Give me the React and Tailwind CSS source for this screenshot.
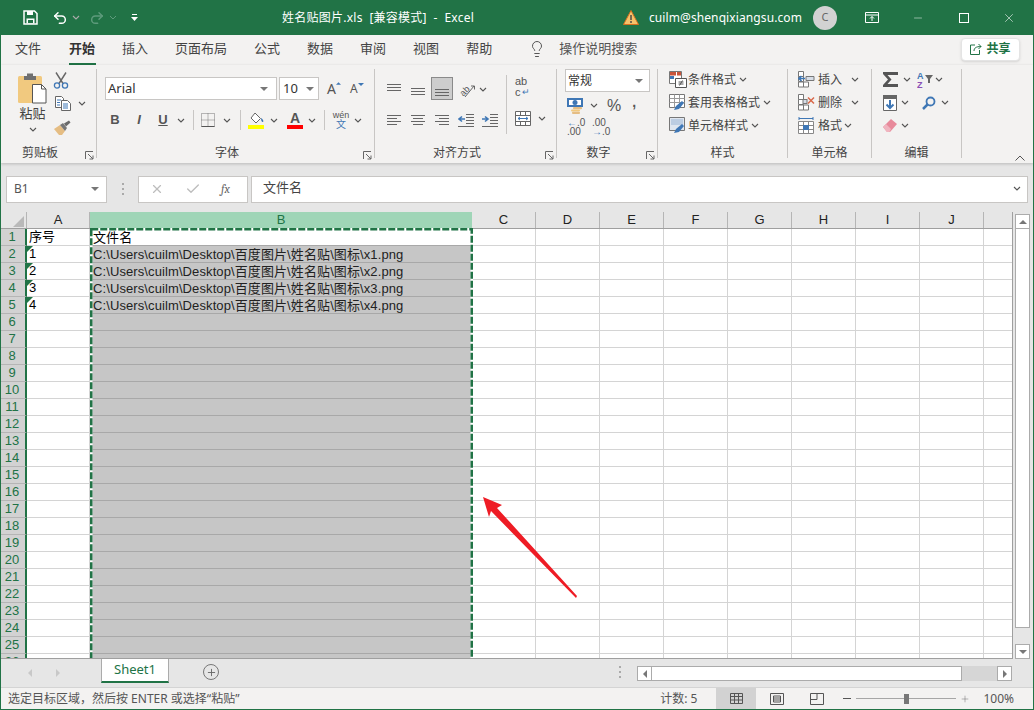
import { Undo2, Redo2, Lightbulb, X, Check, Minus, Plus } from "lucide-react"

const Chev = ({ className = "" }) => (
  <svg width="8" height="5" viewBox="0 0 8 5" className={`shrink-0 ${className}`}>
    <path d="M1 1l3 3 3-3" fill="none" stroke="#555" strokeWidth="1.1" />
  </svg>
)

const Tri = ({ dir = "down", color = "#777", size = 4 }) => {
  const pts = {
    down: "0,0 8,0 4,4",
    up: "0,4 8,4 4,0",
    left: "4,0 4,8 0,4",
    right: "0,0 0,8 4,4",
  }
  const vertical = dir === "down" || dir === "up"
  return (
    <svg width={vertical ? size * 2 : size} height={vertical ? size : size * 2} viewBox={vertical ? "0 0 8 4" : "0 0 4 8"}>
      <polygon points={pts[dir]} fill={color} />
    </svg>
  )
}

const Launcher = () => (
  <svg width="9" height="9" viewBox="0 0 9 9" className="shrink-0">
    <path d="M0.5 8V0.5H8M3 3l5 5M8 4.5V8H4.5" fill="none" stroke="#666" strokeWidth="1" />
  </svg>
)

const Lines = ({ rows }) => (
  <svg width="16" height="16" viewBox="0 0 16 16">
    {rows.map(([y, x1, x2], i) => (
      <line key={i} x1={x1} x2={x2} y1={y + 0.5} y2={y + 0.5} stroke="#666" />
    ))}
  </svg>
)

const Indent = ({ flip }) => (
  <svg width="16" height="14" viewBox="0 0 16 14">
    <path d="M8 1.5h8M8 4.5h8M8 7.5h8M8 10.5h8M0 13.5h16" stroke="#666" fill="none" />
    <path
      d={flip ? "M0 6h5M3 3.5L6 6 3 8.5" : "M1 6h6M4 3.5L1 6l3 2.5"}
      stroke="#3f77b5"
      strokeWidth="1.6"
      fill="none"
    />
  </svg>
)

const PasteIcon = () => (
  <svg width="29" height="32" viewBox="0 0 29 32">
    <rect x="0" y="4" width="24" height="27" rx="1.5" fill="#f1c97f" />
    <path d="M6 4h3V1.5h6V4h3v4H6z" fill="#6f6f6f" />
    <path d="M14.5 12.5h9l4.5 4.5v14H14.5z" fill="#fff" stroke="#555" />
    <path d="M23.5 12.5v4.5H28" fill="none" stroke="#555" />
  </svg>
)

const CutIcon = () => (
  <svg width="16" height="17" viewBox="0 0 16 17">
    <path d="M3 0.5l7 11M13 0.5l-7 11" stroke="#666" strokeWidth="1.4" />
    <circle cx="4" cy="13.5" r="2.6" fill="none" stroke="#3f77b5" strokeWidth="1.3" />
    <circle cx="12" cy="13.5" r="2.6" fill="none" stroke="#3f77b5" strokeWidth="1.3" />
  </svg>
)

const CopyIcon = () => (
  <svg width="16" height="15" viewBox="0 0 16 15">
    <path d="M.5.5h6l2 2v9h-8z" fill="#fff" stroke="#666" />
    <path d="M6.5 4.5h6l3 3v7h-9z" fill="#fff" stroke="#666" />
    <path d="M2 4h4M2 6.5h3M2 9h3M8 8h5M8 10h5M8 12h5" stroke="#3f77b5" />
  </svg>
)

const BrushIcon = () => (
  <svg width="17" height="15" viewBox="0 0 17 15">
    <path d="M0 9l6-4 5 6-3 4H5z" fill="#e5bd83" />
    <path d="M6 5l3-2 4 5-2 3z" fill="#777" />
    <path d="M10 3.5L15 .5l1.5 2-4.5 4z" fill="#6a6a6a" />
  </svg>
)

const BorderIcon = () => (
  <svg width="14" height="14" viewBox="0 0 14 14">
    <path d="M.5.5h13v13H.5zM7 .5v13M.5 7h13" fill="none" stroke="#777" strokeDasharray="1 1" />
    <path d="M.5 13.5h13" stroke="#555" />
  </svg>
)

const FillIcon = () => (
  <svg width="17" height="17" viewBox="0 0 17 17">
    <path d="M7 1l5.5 5.5L8 11 3 6z" fill="#fff" stroke="#666" />
    <path d="M13 6c2 1.5 3 3 2 4-1 .5-2-1-2-4z" fill="#3f77b5" />
    <rect x="0" y="13" width="16" height="4" fill="#ffff00" />
  </svg>
)

const OrientIcon = () => (
  <svg width="18" height="16" viewBox="0 0 18 16">
    <g transform="rotate(-45 7 9)">
      <text x="1" y="11" fontSize="9" fill="#555" fontFamily="Liberation Sans">ab</text>
    </g>
    <path d="M6 15L15 4M12 4h3.5v3.5" fill="none" stroke="#666" />
  </svg>
)

const MergeIcon = () => (
  <svg width="16" height="15" viewBox="0 0 16 15">
    <path d="M.5.5h15v14H.5zM.5 4.5h15M.5 10.5h15M5.5.5v4M10.5.5v4M5.5 10.5v4M10.5 10.5v4" fill="#fff" stroke="#666" />
    <path d="M3 7.5h10M5 6l-2 1.5L5 9M11 6l2 1.5L11 9" fill="none" stroke="#3f77b5" />
  </svg>
)

const MoneyIcon = () => (
  <svg width="17" height="16" viewBox="0 0 17 16">
    <path d="M1 1h14v7H1z" fill="#fff" stroke="#3f77b5" strokeWidth="2" />
    <ellipse cx="8" cy="4.5" rx="2.5" ry="2.5" fill="#3f77b5" />
    <rect x="6" y="9" width="9" height="2.2" rx="1" fill="#e5bd83" />
    <rect x="4" y="11.4" width="9" height="2.2" rx="1" fill="#f1c97f" />
    <rect x="5" y="13.8" width="8" height="2.2" rx="1" fill="#e5bd83" />
  </svg>
)

const CondIcon = () => (
  <svg width="18" height="17" viewBox="0 0 18 17">
    <path d="M.5.5h12v12H.5z" fill="#fff" stroke="#777" />
    <rect x="1" y="1" width="6" height="3.5" fill="#c9553b" />
    <rect x="1" y="5" width="4" height="3" fill="#3f77b5" />
    <rect x="8" y="1" width="4" height="3.5" fill="#c9553b" />
    <path d="M6.5 7.5h11v9h-11z" fill="#fff" stroke="#555" />
    <path d="M9.5 11h5M9.5 13h5M13.5 9.5l-3 5" stroke="#555" fill="none" />
  </svg>
)

const TableIcon = ({ fillHead }) => (
  <svg width="18" height="17" viewBox="0 0 18 17">
    <path d="M.5.5h15v13H.5z" fill={fillHead ? "#dfe6ef" : "#fff"} stroke="#777" />
    {fillHead ? (
      <path d="M2 2h12v6H2z" fill="#bccde2" />
    ) : (
      <path d="M5.5.5v13M10.5.5v13M.5 4.5h15M.5 8.5h15" stroke="#999" />
    )}
    <path d="M5 16l2-4 6-5 2 2-5 6z" fill="#3f77b5" />
  </svg>
)

const CellsIcon = ({ mode }) => (
  <svg width="17" height="17" viewBox="0 0 17 17">
    <path d="M.5.5h5v5h-5zM.5 5.5h5v5h-5zM.5 11h5v5h-5zM5.5 11h5v5h-5z" fill="#fff" stroke="#777" />
    {mode === "insert" ? (
      <>
        <path d="M8 5.5h8v4H8z" fill="#d6dde7" stroke="#777" />
        <path d="M1 7.5h6M3.5 5l-2.5 2.500 2.500 2.500" stroke="#3f77b5" strokeWidth="1.6" fill="none" />
      </>
    ) : (
      <>
        <rect x="5" y="5.5" width="4" height="4" fill="#d6dde7" stroke="#777" />
        <path d="M10 3.500l6 6M16 3.500l-6 6" stroke="#d9694a" strokeWidth="1.5" />
      </>
    )}
  </svg>
)

const FormatIcon = () => (
  <svg width="16" height="17" viewBox="0 0 16 17">
    <path d="M.5 4.500h15v12H.5zM5.500 4.500v12M10.500 4.500v12M.5 8.500h15M.5 12.500h15" fill="#fff" stroke="#888" />
    <rect x="5" y="8" width="6" height="5" fill="#3f77b5" />
    <path d="M1 1.500h14M1 0v3M15 0v3" stroke="#3f77b5" />
  </svg>
)

const SumIcon = () => (
  <svg width="15" height="15" viewBox="0 0 15 15">
    <path d="M0 0h15v3H4.500l4 4.500-4 4.500H15v3H0v-2l5-5.500L0 2z" fill="#555" />
  </svg>
)

const SortIcon = () => (
  <svg width="16" height="18" viewBox="0 0 16 18">
    <text x="0" y="8" fontSize="9" fontWeight="700" fill="#3f77b5" fontFamily="Liberation Sans">A</text>
    <text x="0" y="17" fontSize="9" fontWeight="700" fill="#8a4fb5" fontFamily="Liberation Sans">Z</text>
    <path d="M8 4h8l-3 4v4h-2V8z" fill="#666" />
  </svg>
)

const FillDownIcon = () => (
  <svg width="14" height="16" viewBox="0 0 14 16">
    <path d="M.5.5h13v15H.5z" fill="#fff" stroke="#666" />
    <rect x="0" y="0" width="14" height="4" fill="#666" />
    <path d="M7 5v8M3.500 9.500L7 13l3.500-3.500" stroke="#3f77b5" strokeWidth="2" fill="none" />
  </svg>
)

const FindIcon = () => (
  <svg width="14" height="14" viewBox="0 0 14 14">
    <circle cx="8.500" cy="5.500" r="4" fill="none" stroke="#3f77b5" strokeWidth="1.800" />
    <path d="M5.500 8.500L1 13" stroke="#3f77b5" strokeWidth="2.500" />
  </svg>
)

const EraserIcon = () => (
  <svg width="14" height="13" viewBox="0 0 14 13">
    <path d="M0 8l8-8 6 5-7 8H4z" fill="#e88a9b" />
    <path d="M0 8l3-3 5 5-1.500 3H4z" fill="#f0b4bf" />
  </svg>
)

const Group = ({ w, label, launcher, children }) => (
  <>
    <div className="flex h-full flex-col" style={{ width: w }}>
      <div className="h-[80px]">{children}</div>
      <div className="flex h-[16px] items-center">
        <div className={`flex-1 text-center text-[12px] leading-none text-[#444] ${launcher ? "pr-[6px]" : ""}`}>{label}</div>
        {launcher && (
          <div className="mt-[4px] w-[11px]">
            <Launcher />
          </div>
        )}
      </div>
    </div>
    <div className="mt-[4px] h-[89px] w-px bg-[#c8c6c4]" />
  </>
)

const StyleRow = ({ icon, label, top }) => (
  <div className={`flex h-[23px] items-center ${top}`}>
    <div className="w-[18px]">{icon}</div>
    <span className="ml-px text-[12px] text-[#444]">{label}</span>
    <Chev className="ml-[3px]" />
  </div>
)

const columns = [
  { name: "C", w: "w-[64px]" },
  { name: "D", w: "w-[64px]" },
  { name: "E", w: "w-[64px]" },
  { name: "F", w: "w-[64px]" },
  { name: "G", w: "w-[64px]" },
  { name: "H", w: "w-[64px]" },
  { name: "I", w: "w-[64px]" },
  { name: "J", w: "w-[64px]" },
  { name: "", w: "w-[28px]" },
]

const tabs = ["公式", "数据", "审阅", "视图", "帮助"]
const rows = Array.from({ length: 26 }, (_, i) => i + 1)

const cellFont = "font-['Liberation_Sans','Noto_Sans_CJK_SC',sans-serif]"

const App = () => {
  return (
    <div className="box-border flex h-[710px] w-[1034px] flex-col overflow-hidden border-x border-b border-[#217346] bg-[#e6e6e6] font-['Noto_Sans','Noto_Sans_CJK_SC',sans-serif] text-[#444]">
      {/* Title bar */}
      <div className="flex h-[35px] shrink-0 items-center bg-[#217346] text-white">
        <svg width="15" height="15" viewBox="0 0 15 15" className="ml-[22px]">
          <path d="M1 1h10.500L14 3.500V14H1z" fill="none" stroke="#fff" strokeWidth="1.500" />
          <rect x="4" y="1" width="6" height="4" fill="#fff" />
          <rect x="3.500" y="8.500" width="8" height="5" fill="#fff" />
          <rect x="5" y="10" width="5" height="3" fill="#217346" />
        </svg>
        <Undo2 size={16} strokeWidth={2.200} className="ml-[14px]" />
        <Chev className="ml-[4px] invert" />
        <Redo2 size={16} strokeWidth={2.200} className="ml-[9px] text-[#5e9b7c]" />
        <svg width="8" height="5" viewBox="0 0 8 5" className="ml-[4px]">
          <path d="M1 1l3 3 3-3" fill="none" stroke="#5e9b7c" />
        </svg>
        <svg width="7" height="8" viewBox="0 0 7 8" className="ml-[14px]">
          <path d="M1 .5h5" stroke="#fff" />
          <polygon points="0,3 7,3 3.500,7" fill="#fff" />
        </svg>
        <div className="ml-[144px] whitespace-pre text-[12px] tracking-[0.25px]">姓名贴图片.xls  [兼容模式]  -  Excel</div>
        <div className="ml-auto flex items-center">
          <svg width="16" height="15" viewBox="0 0 16 15">
            <polygon points="8,.5 15.500,14.500 .5,14.500" fill="#f6c26b" stroke="#d9701f" />
            <path d="M8 5v5M8 11v2" stroke="#444" strokeWidth="1.400" />
          </svg>
          <span className="ml-[10px] text-[12px] tracking-[0.1px]">cuilm@shenqixiangsu.com</span>
          <div className="ml-[11px] flex h-[24px] w-[24px] items-center justify-center rounded-full bg-[#d2d2d2] text-[11px] text-[#666]">
            C
          </div>
          <svg width="14" height="11" viewBox="0 0 14 11" className="ml-[28px]">
            <path d="M.5.5h13v10H.5zM.5 3h13M7 9V4.500M5 6.500l2-2 2 2" fill="none" stroke="#fff" />
          </svg>
          <Minus size={12} strokeWidth={1} className="ml-[33px]" />
          <svg width="10" height="10" viewBox="0 0 10 10" className="ml-[35px]">
            <rect x=".5" y=".5" width="9" height="9" fill="none" stroke="#fff" />
          </svg>
          <X size={14} strokeWidth={1} className="ml-[33px] mr-[17px]" />
        </div>
      </div>

      {/* Tabs */}
      <div className="flex h-[30px] shrink-0 items-center bg-[#f3f2f1] pb-[2px] text-[13px]">
        <span className="ml-[14px]">文件</span>
        <div className="relative ml-[28px]">
          <span className="font-bold text-[#333]">开始</span>
          <div className="absolute -bottom-[6px] left-0 h-[2px] w-[27px] bg-[#217346]" />
        </div>
        <span className="ml-[27px]">插入</span>
        <span className="ml-[27px]">页面布局</span>
        {tabs.map((t) => (
          <span key={t} className="ml-[27px]">
            {t}
          </span>
        ))}
        <Lightbulb size={18} strokeWidth={1.200} className="ml-[36px]" />
        <span className="ml-[13px] text-[#555]">操作说明搜索</span>
        <div className="ml-auto mr-[13px] flex h-[23px] w-[59px] items-center justify-center gap-[4px] rounded-sm border border-[#e4e4e4] bg-white text-[#217346] shadow-sm">
          <svg width="12" height="12" viewBox="0 0 12 12">
            <path d="M5 2H.5v9.500h9V7M4 8c0-3 2-4.500 7-4.500M8.500 1l2.500 2.500L8.500 6" fill="none" stroke="#217346" />
          </svg>
          <span className="text-[12px] font-bold">共享</span>
        </div>
      </div>

      {/* Ribbon */}
      <div className="relative z-10 flex h-[98px] shrink-0 bg-[#f3f2f1] shadow-[0_1px_3px_rgba(0,0,0,0.2)]">
        <Group w={95} label="剪贴板" launcher>
          <div className="flex pt-[7px]">
            <div className="ml-[17px] flex w-[29px] flex-col items-center">
              <PasteIcon />
              <span className="text-[13px] leading-[18px]">粘贴</span>
              <Chev className="mt-[5px]" />
            </div>
            <div className="ml-[8px] flex flex-col items-start">
              <div className="ml-[-2px]">
                <CutIcon />
              </div>
              <div className="mt-[7px] flex items-center">
                <CopyIcon />
                <Chev className="ml-[7px]" />
              </div>
              <div className="mt-[9px] ml-[-1px]">
                <BrushIcon />
              </div>
            </div>
          </div>
        </Group>

        <Group w={277} label="字体" launcher>
          <div className="mt-[12px] flex h-[23px] items-center pl-[8px]">
            <div className="flex h-[23px] w-[172px] items-center justify-between border border-[#c8c6c4] bg-white pl-[2px] pr-[8px] text-[13px] text-[#333]">
              Arial
              <Tri />
            </div>
            <div className="ml-[2px] flex h-[23px] w-[40px] items-center justify-between border border-[#c8c6c4] bg-white pl-[3px] pr-[4px] text-[13px] text-[#333]">
              10
              <Tri />
            </div>
            <div className="ml-[8px] flex w-[14px] items-start text-[14px] leading-none text-[#555]">
              A
              <Tri dir="up" color="#3f77b5" size={3} />
            </div>
            <div className="ml-[9px] flex w-[14px] items-start text-[12px] leading-none text-[#555]">
              A
              <Tri color="#3f77b5" size={3} />
            </div>
          </div>
          <div className={`mt-[9px] flex h-[22px] items-center pl-[13px] text-[13px] text-[#555] ${cellFont}`}>
            <span className="w-[10px] text-center font-bold">B</span>
            <span className="ml-[14px] w-[10px] text-center font-bold italic">I</span>
            <span className="ml-[14px] w-[10px] text-center font-bold underline">U</span>
            <Chev className="ml-[9px]" />
            <div className="ml-[8px] h-[20px] w-px bg-[#c8c6c4]" />
            <div className="ml-[7px]">
              <BorderIcon />
            </div>
            <Chev className="ml-[8px]" />
            <div className="ml-[9px] h-[20px] w-px bg-[#c8c6c4]" />
            <div className="ml-[7px]">
              <FillIcon />
            </div>
            <Chev className="ml-[5px]" />
            <div className="ml-[9px] flex w-[16px] flex-col items-center">
              <span className="text-[14px] font-bold leading-[13px]">A</span>
              <div className="h-[4px] w-[16px] bg-[#ff0000]" />
            </div>
            <Chev className="ml-[5px]" />
            <div className="ml-[8px] h-[20px] w-px bg-[#c8c6c4]" />
            <div className="ml-[8px] flex w-[16px] flex-col items-center leading-none">
              <span className="text-[9px]">wén</span>
              <span className="text-[10px] text-[#3f77b5]">文</span>
            </div>
            <Chev className="ml-[5px]" />
          </div>
        </Group>

        <Group w={181} label="对齐方式" launcher>
          <div className="flex pl-[11px]">
            <div className="flex w-[120px] flex-col">
              <div className="flex h-[35px] items-end">
                <div className="mb-[2px] w-[16px]">
                  <Lines rows={[[2, 1, 15], [5, 1, 15], [8, 1, 15]]} />
                </div>
                <div className="mb-[2px] ml-[8px] w-[16px]">
                  <Lines rows={[[6, 1, 15], [9, 1, 15], [12, 1, 15]]} />
                </div>
                <div className="ml-[5px] flex h-[23px] w-[22px] items-center justify-center border border-[#8a8a8a] bg-[#cdcdcd]">
                  <Lines rows={[[8, 1, 15], [11, 1, 15], [14, 1, 15]]} />
                </div>
                <div className="mb-[2px] ml-[6px]">
                  <OrientIcon />
                </div>
                <Chev className="mb-[8px] ml-[2px]" />
              </div>
              <div className="mt-[12px] flex h-[16px] items-center gap-[8px]">
                <Lines rows={[[3, 1, 15], [6, 1, 11], [9, 1, 15], [12, 1, 11]]} />
                <Lines rows={[[3, 1, 15], [6, 3, 13], [9, 1, 15], [12, 3, 13]]} />
                <Lines rows={[[3, 1, 15], [6, 5, 15], [9, 1, 15], [12, 5, 15]]} />
                <Indent />
                <Indent flip />
              </div>
            </div>
            <div className="mt-[10px] ml-0 h-[59px] w-px bg-[#c8c6c4]" />
            <div className="ml-[8px] flex flex-col">
              <div className={`mt-[11px] h-[22px] text-[11px] leading-[11px] text-[#555] ${cellFont}`}>
                <div>ab</div>
                <div className="flex items-center">
                  c<span className="ml-px text-[9px] text-[#3f77b5]">↵</span>
                </div>
              </div>
              <div className="mt-[13px] flex items-center">
                <MergeIcon />
                <Chev className="ml-[7px]" />
              </div>
            </div>
          </div>
        </Group>

        <Group w={100} label="数字" launcher>
          <div className="ml-[8px] mt-[4px] flex h-[23px] w-[85px] items-center justify-between border border-[#c8c6c4] bg-white pl-[2px] pr-[6px] text-[12px] text-[#333]">
            常规
            <Tri />
          </div>
          <div className="ml-[10px] mt-[4px] flex h-[19px] items-center">
            <MoneyIcon />
            <Chev className="ml-[6px]" />
            <span className={`ml-[9px] text-[16px] text-[#555] ${cellFont}`}>%</span>
            <span className={`ml-[11px] mb-[6px] text-[14px] font-bold text-[#555] ${cellFont}`}>,</span>
          </div>
          <div className={`ml-[10px] mt-[3px] flex text-[10px] leading-[9px] text-[#555] ${cellFont}`}>
            <div className="w-[25px]">
              <div className="flex items-center">
                <span className="text-[#3f77b5]">←</span>.0
              </div>
              <div>.00</div>
            </div>
            <div>
              <div>.00</div>
              <div className="flex items-center">
                <span className="text-[#3f77b5]">→</span>.0
              </div>
            </div>
          </div>
        </Group>

        <Group w={129} label="样式">
          <div className="flex flex-col pl-[11px] pt-[3px]">
            <StyleRow icon={<CondIcon />} label="条件格式" />
            <StyleRow icon={<TableIcon />} label="套用表格格式" />
            <StyleRow icon={<TableIcon fillHead />} label="单元格样式" />
          </div>
        </Group>

        <Group w={83} label="单元格">
          <div className="flex flex-col pl-[10px] pt-[3px]">
            <div className="flex h-[23px] items-center">
              <CellsIcon mode="insert" />
              <span className="ml-[3px] text-[12px]">插入</span>
              <Chev className="ml-[9px]" />
            </div>
            <div className="flex h-[23px] items-center">
              <CellsIcon mode="delete" />
              <span className="ml-[3px] text-[12px]">删除</span>
              <Chev className="ml-[9px]" />
            </div>
            <div className="flex h-[23px] items-center">
              <FormatIcon />
              <span className="ml-[4px] text-[12px]">格式</span>
              <Chev className="ml-[2px]" />
            </div>
          </div>
        </Group>

        <Group w={89} label="编辑">
          <div className="flex flex-col pl-[11px] pt-[6px]">
            <div className="flex h-[17px] items-center">
              <SumIcon />
              <Chev className="ml-[5px]" />
              <div className="ml-[6px]">
                <SortIcon />
              </div>
              <Chev className="ml-[2px]" />
            </div>
            <div className="mt-[6px] flex h-[17px] items-center">
              <FillDownIcon />
              <Chev className="ml-[4px]" />
              <div className="ml-[13px]">
                <FindIcon />
              </div>
              <Chev className="ml-[5px]" />
            </div>
            <div className="mt-[6px] flex h-[17px] items-center">
              <EraserIcon />
              <Chev className="ml-[4px]" />
            </div>
          </div>
        </Group>

        <svg width="10" height="6" viewBox="0 0 10 6" className="ml-[53px] mt-[90px]">
          <path d="M.5 5.500L5 1l4.500 4.500" fill="none" stroke="#555" />
        </svg>
      </div>

      {/* Formula bar */}
      <div className="flex h-[49px] shrink-0 items-center bg-[#e6e6e6] pt-[3px]">
        <div className="ml-[5px] flex h-[27px] w-[101px] items-center justify-between border border-[#c8c6c4] bg-white pl-[7px] pr-[7px] text-[12px] text-[#555]">
          B1
          <Tri color="#777" />
        </div>
        <div className="ml-[15px] flex h-[12px] w-[3px] flex-col justify-between">
          <div className="h-[2px] w-[2px] bg-[#aaa]" />
          <div className="h-[2px] w-[2px] bg-[#aaa]" />
          <div className="h-[2px] w-[2px] bg-[#aaa]" />
        </div>
        <div className="ml-[13px] flex h-[27px] w-[110px] items-center border border-[#c8c6c4] bg-white">
          <X size={14} className="ml-[11px] text-[#bdbdbd]" />
          <Check size={16} className="ml-[21px] text-[#bdbdbd]" />
          <span className="ml-[20px] font-serif text-[12px] italic text-[#666]">fx</span>
        </div>
        <div className="ml-[3px] flex h-[27px] w-[777px] items-center justify-between border border-[#c8c6c4] bg-white pb-[2px] pl-[11px] pr-[6px] text-[13px]">
          文件名
          <Chev />
        </div>
      </div>

      {/* Sheet */}
      <div className="flex min-h-0 flex-1">
        <div className={`relative w-[1012px] overflow-hidden border-b border-r border-[#9f9f9f] bg-white ${cellFont}`}>
          <div className="flex h-[17px] border-b border-[#9f9f9f] bg-[#e6e6e6] text-[13px] leading-[16px] text-[#222]">
            <div className="flex w-[26px] items-end justify-end border-r border-[#b5b5b5] pb-[1px] pr-[2px]">
              <svg width="11" height="11" viewBox="0 0 11 11">
                <polygon points="11,0 11,11 0,11" fill="#b9b9b9" />
              </svg>
            </div>
            <div className="w-[63px] border-r border-[#b5b5b5] text-center">A</div>
            <div className="w-[382px] bg-[#9fd5b7] text-center text-[#217346]">B</div>
            {columns.map((c) => (
              <div key={c.name} className={`${c.w} border-r border-[#b5b5b5] text-center last:border-r-0`}>
                {c.name}
              </div>
            ))}
          </div>
          {rows.map((r) => (
            <div key={r} className="flex h-[17px] text-[13px] leading-[16px] text-black">
              <div className="w-[26px] border-b border-r-2 border-[#b5b5b5] border-r-[#217346] bg-[#d2d2d2] pr-[2px] text-center text-[#217346]">
                {r}
              </div>
              <div className="relative w-[63px] border-b border-r border-[#d4d4d4] pl-[2px]">
                {r === 1 && "序号"}
                {r >= 2 && r <= 5 && (
                  <>
                    <div className="absolute left-0 top-0 border-r-[6px] border-t-[6px] border-r-transparent border-t-[#217346]" />
                    {r - 1}
                  </>
                )}
              </div>
              <div
                className={`w-[382px] whitespace-nowrap border-b pl-[3px] leading-[17px] tracking-[0.1px] ${
                  r === 1 ? "border-[#a8a8a8] bg-white" : "border-[#a8a8a8] bg-[#c6c6c6] text-[#222]"
                }`}
              >
                {r === 1 && "文件名"}
                {r >= 2 && r <= 5 && `C:\\Users\\cuilm\\Desktop\\百度图片\\姓名贴\\图标\\x${r - 1}.png`}
              </div>
              {columns.map((c) => (
                <div key={c.name} className={`${c.w} border-b border-r border-[#d4d4d4] last:border-r-0`} />
              ))}
            </div>
          ))}

          {/* copy marquee */}
          <svg width="386" height="440" viewBox="0 0 386 440" className="absolute left-[89px] top-[16px]">
            <rect x="1.250" y="1.250" width="380.500" height="460" fill="none" stroke="#fff" strokeWidth="2.500" />
            <rect x="1.250" y="1.250" width="380.500" height="460" fill="none" stroke="#217346" strokeWidth="2.500" strokeDasharray="7 2" />
          </svg>

          {/* red arrow */}
          <svg width="100" height="110" viewBox="0 0 100 110" className="absolute left-[479px] top-[278px]">
            <polygon points="3,7 22,15 17,18 97,106 96,108 11,21 9,27" fill="#ee1c25" />
          </svg>
        </div>

        <div className="flex flex-1 flex-col items-start pl-[2px] pt-[2px]">
          <div className="flex h-[15px] w-[15px] items-center justify-center border border-[#ababab] bg-white">
            <Tri dir="up" />
          </div>
          <div className="h-[399px] w-[15px] border-x border-b border-[#ababab] bg-white" />
          <div className="mt-auto flex h-[15px] w-[15px] items-center justify-center border border-[#ababab] bg-white">
            <Tri />
          </div>
        </div>
      </div>

      {/* Sheet tabs */}
      <div className="flex h-[28px] shrink-0 items-start bg-[#e6e6e6]">
        <div className="ml-[27px] mt-[10px]">
          <Tri dir="left" color="#c8c8c8" />
        </div>
        <div className="ml-[24px] mt-[10px]">
          <Tri dir="right" color="#c8c8c8" />
        </div>
        <div className="ml-[41px] flex h-[24px] w-[68px] items-center justify-center border-x border-b-2 border-x-[#ababab] border-b-[#217346] bg-white text-[13px] text-[#217346]">
          Sheet1
        </div>
        <div className="ml-[34px] mt-[5px] flex h-[16px] w-[16px] items-center justify-center rounded-full border border-[#777]">
          <Plus size={11} strokeWidth={2} className="text-[#666]" />
        </div>
        <div className="ml-[400px] mt-[7px] flex h-[12px] w-[2px] flex-col justify-between">
          <div className="h-[2px] w-[2px] bg-[#aaa]" />
          <div className="h-[2px] w-[2px] bg-[#aaa]" />
          <div className="h-[2px] w-[2px] bg-[#aaa]" />
        </div>
        <div className="ml-[16px] mt-[7px] flex h-[15px] w-[375px] bg-[#d6d6d6]">
          <div className="flex w-[15px] items-center justify-center border border-[#ababab] bg-white">
            <Tri dir="left" />
          </div>
          <div className="w-[310px] border-y border-r border-[#ababab] bg-white" />
          <div className="ml-auto flex w-[15px] items-center justify-center border border-[#ababab] bg-white">
            <Tri dir="right" />
          </div>
        </div>
      </div>

      {/* Status bar */}
      <div className="flex h-[22px] shrink-0 items-center border-t border-[#d4d4d4] bg-[#f3f2f1] text-[12px] text-[#555]">
        <span className="ml-[7px]">选定目标区域，然后按 ENTER 或选择“粘贴”</span>
        <span className="ml-auto">计数: 5</span>
        <div className="ml-[19px] flex h-full w-[40px] items-center justify-center bg-[#d2d2d2]">
          <svg width="13" height="11" viewBox="0 0 13 11">
            <path d="M.5.5h12v10H.5zM4.500.5v10M8.500.5v10M.5 3.500h12M.5 7h12" fill="none" stroke="#555" />
          </svg>
        </div>
        <svg width="14" height="12" viewBox="0 0 14 12" className="ml-[14px]">
          <path d="M.5.5h13v11H.5z M3.500 3h7v6h-7zM3.500 5h7M3.500 7h7" fill="none" stroke="#555" />
        </svg>
        <svg width="14" height="12" viewBox="0 0 14 12" className="ml-[26px]">
          <path d="M.5.5h13v11H.5zM7 .5v6H.5" fill="none" stroke="#555" />
        </svg>
        <div className="ml-[19px] h-px w-[8px] bg-[#555]" />
        <div className="ml-[5px] flex h-[10px] w-[100px] items-center">
          <div className="h-px w-[48px] bg-[#a6a6a6]" />
          <div className="h-[10px] w-[5px] bg-[#777]" />
          <div className="h-px flex-1 bg-[#a6a6a6]" />
        </div>
        <Plus size={10} strokeWidth={1} className="ml-[4px]" />
        <span className="ml-[13px] mr-[19px]">100%</span>
      </div>
    </div>
  )
}

export default App
